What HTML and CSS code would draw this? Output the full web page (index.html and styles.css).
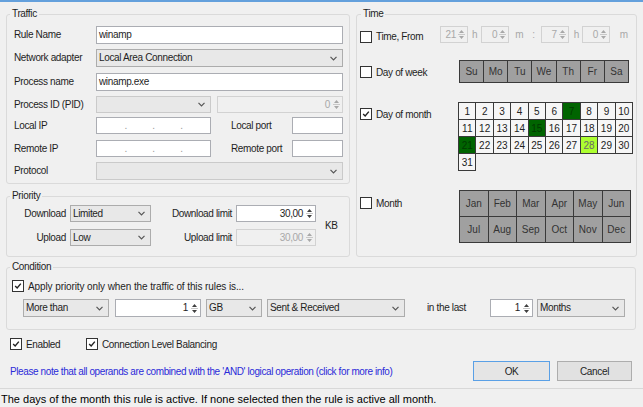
FILE: index.html
```html
<!DOCTYPE html>
<html>
<head>
<meta charset="utf-8">
<title>Rule</title>
<link rel="stylesheet" href="styles.css">
</head>
<body>
<svg class="defs" width="0" height="0">
  <symbol id="chev" viewBox="0 0 7 5"><path d="M0.5 0.8 L3.5 3.8 L6.5 0.8" fill="none" stroke="#555" stroke-width="1.2"/></symbol>
  <symbol id="arr" viewBox="0 0 9 15"><path d="M2 6 L4.5 3 L7 6 Z M2 9 L4.5 12 L7 9 Z" fill="currentColor"/><path d="M1 7.5 H8" stroke="#c8c8c8" stroke-width="1"/></symbol>
  <symbol id="tick" viewBox="0 0 12 12"><path d="M2.6 6 L5 8.4 L9.4 3.2" fill="none" stroke="#222" stroke-width="1.7"/></symbol>
</svg>
<div class="dialog">
  <div class="top">
    <div class="left-col">
      <fieldset class="group g-traffic">
        <legend>Traffic</legend>
        <div class="traffic-grid">
          <span class="lbl">Rule Name</span>
          <div class="tb">winamp</div>

          <span class="lbl">Network adapter</span>
          <div class="dd"><span>Local Area Connection</span><svg class="chev"><use href="#chev"/></svg></div>

          <span class="lbl">Process name</span>
          <div class="tb">winamp.exe</div>

          <span class="lbl">Process ID (PID)</span>
          <div class="pair">
            <div class="dd off w-pid"><span></span><svg class="chev"><use href="#chev"/></svg></div>
            <div class="spin off w-pidspin"><span class="val">0</span><svg class="arr"><use href="#arr"/></svg></div>
          </div>

          <span class="lbl">Local IP</span>
          <div class="pair">
            <div class="tb ip"><i>.</i><i>.</i><i>.</i></div>
            <span class="port-lbl">Local port</span>
            <div class="tb port"></div>
          </div>

          <span class="lbl">Remote IP</span>
          <div class="pair">
            <div class="tb ip"><i>.</i><i>.</i><i>.</i></div>
            <span class="port-lbl">Remote port</span>
            <div class="tb port"></div>
          </div>

          <span class="lbl">Protocol</span>
          <div class="dd off tall"><span></span><svg class="chev"><use href="#chev"/></svg></div>
        </div>
      </fieldset>

      <fieldset class="group g-priority">
        <legend>Priority</legend>
        <div class="prio-grid">
          <span class="plbl">Download</span>
          <div class="dd short"><span>Limited</span><svg class="chev"><use href="#chev"/></svg></div>
          <span class="plbl">Download limit</span>
          <div class="spin short"><span class="val">30,00</span><svg class="arr"><use href="#arr"/></svg></div>
          <span class="kb">KB</span>

          <span class="plbl">Upload</span>
          <div class="dd short"><span>Low</span><svg class="chev"><use href="#chev"/></svg></div>
          <span class="plbl">Upload limit</span>
          <div class="spin off short"><span class="val">30,00</span><svg class="arr"><use href="#arr"/></svg></div>
        </div>
      </fieldset>
    </div>

    <fieldset class="group g-time">
      <legend>Time</legend>
      <div class="trow r-time">
        <label class="chk w-time"><span class="cb"></span>Time, From</label>
        <div class="spin off tspin"><span class="val">21</span><svg class="arr"><use href="#arr"/></svg></div>
        <span class="unit u1">h</span>
        <div class="spin off tspin"><span class="val">0</span><svg class="arr"><use href="#arr"/></svg></div>
        <span class="unit u2">m</span>
        <span class="unit u3">:</span>
        <div class="spin off tspin"><span class="val">7</span><svg class="arr"><use href="#arr"/></svg></div>
        <span class="unit u4">h</span>
        <div class="spin off tspin"><span class="val">0</span><svg class="arr"><use href="#arr"/></svg></div>
        <span class="unit u5">m</span>
      </div>

      <div class="trow r-week">
        <label class="chk w-side"><span class="cb"></span>Day of week</label>
        <table class="cal gray week">
          <tr><td>Su</td><td>Mo</td><td>Tu</td><td>We</td><td>Th</td><td>Fr</td><td>Sa</td></tr>
        </table>
      </div>

      <div class="trow r-mday">
        <label class="chk w-side"><span class="cb on"><svg><use href="#tick"/></svg></span>Day of month</label>
        <table class="cal days">
          <tr><td>1</td><td>2</td><td>3</td><td>4</td><td>5</td><td>6</td><td class="sel">7</td><td>8</td><td>9</td><td>10</td></tr>
          <tr><td>11</td><td>12</td><td>13</td><td>14</td><td class="sel">15</td><td>16</td><td>17</td><td>18</td><td>19</td><td>20</td></tr>
          <tr><td class="sel">21</td><td>22</td><td>23</td><td>24</td><td>25</td><td>26</td><td>27</td><td class="today">28</td><td>29</td><td>30</td></tr>
          <tr><td>31</td></tr>
        </table>
      </div>

      <div class="trow r-month">
        <label class="chk w-side"><span class="cb"></span>Month</label>
        <table class="cal gray months">
          <tr><td>Jan</td><td>Feb</td><td>Mar</td><td>Apr</td><td>May</td><td>Jun</td></tr>
          <tr><td>Jul</td><td>Aug</td><td>Sep</td><td>Oct</td><td>Nov</td><td>Dec</td></tr>
        </table>
      </div>
    </fieldset>
  </div>

  <fieldset class="group g-cond">
    <legend>Condition</legend>
    <label class="chk cond-chk"><span class="cb on"><svg><use href="#tick"/></svg></span>Apply priority only when the traffic of this rules is...</label>
    <div class="cond-row">
      <div class="dd w-more"><span>More than</span><svg class="chev"><use href="#chev"/></svg></div>
      <div class="spin w-amount"><span class="val">1</span><svg class="arr"><use href="#arr"/></svg></div>
      <div class="dd w-unit"><span>GB</span><svg class="chev"><use href="#chev"/></svg></div>
      <div class="dd w-dir"><span>Sent &amp; Received</span><svg class="chev"><use href="#chev"/></svg></div>
      <span class="last-lbl">in the last</span>
      <div class="spin w-period"><span class="val">1</span><svg class="arr"><use href="#arr"/></svg></div>
      <div class="dd w-months"><span>Months</span><svg class="chev"><use href="#chev"/></svg></div>
    </div>
  </fieldset>

  <div class="options">
    <label class="chk opt-enabled"><span class="cb on"><svg><use href="#tick"/></svg></span>Enabled</label>
    <label class="chk"><span class="cb on"><svg><use href="#tick"/></svg></span>Connection Level Balancing</label>
  </div>

  <div class="actions">
    <span class="note">Please note that all operands are combined with the 'AND' logical operation (click for more info)</span>
    <button class="btn default">OK</button>
    <button class="btn">Cancel</button>
  </div>
</div>
<div class="status">The days of the month this rule is active. If none selected then the rule is active all month.</div>
</body>
</html>
```

FILE: styles.css
```css
* { box-sizing: border-box; }
html, body { margin: 0; padding: 0; }
body {
  width: 643px;
  height: 407px;
  overflow: hidden;
  background: #f0f0f0;
  border-top: 2px solid #64a0dc;
  font-family: "Liberation Sans", Arial, sans-serif;
  font-size: 10px;
  letter-spacing: -0.35px;
  color: #1e1e1e;
  display: flex;
  flex-direction: column;
}
.defs { display: block; width: 0; height: 0; overflow: hidden; }
.dialog { flex: 1; }

.top { display: flex; gap: 6px; padding: 6px 6px 0 6px; }
.left-col { width: 344px; display: flex; flex-direction: column; gap: 6px; }

.group {
  margin: 0;
  min-width: 0;
  border: 1px solid #dadada;
  border-radius: 3px;
  padding: 6px 5px 3px 7px;
}
.group legend { padding: 0 2px; margin-left: -4px; height: 12px; line-height: 12px; }

/* Controls */
.tb, .dd, .spin {
  height: 18px;
  border: 1px solid #abadb3;
  background: #fff;
  display: flex;
  align-items: center;
  line-height: 16px;
  white-space: nowrap;
  overflow: hidden;
}
.tb { padding: 0 2px; }
.dd { background: #e8e8e8; border-color: #acacac; padding: 0 5px 0 2px; justify-content: space-between; }
.dd.off { border-color: #cacaca; }
.chev { width: 7px; height: 5px; flex: none; }
.spin { padding: 0 1px 0 2px; }
.spin .val { flex: 1; text-align: right; padding-right: 2px; }
.arr { width: 9px; height: 15px; flex: none; color: #404040; }
.spin.off { background: #f0f0f0; border-color: #d2d2d2; color: #a8a8a8; }
.spin.off .arr { color: #a8a8a8; }

/* Traffic */
.traffic-grid {
  display: grid;
  grid-template-columns: 82px 247px;
  grid-template-rows: 18px 19px 18px 16px 18px 17px 18px;
  row-gap: 5px;
  align-items: start;
}
.lbl { line-height: 17px; }
.pair { display: flex; align-items: flex-start; }
.w-pid { width: 115px; height: 17px; }
.w-pidspin { width: 126px; height: 17px; margin-left: 6px; }
.ip { width: 115px; height: 17px; justify-content: space-evenly; color: #9a9a9a; }
.ip i { font-style: normal; }
.port-lbl { width: 61px; margin-left: 20px; line-height: 17px; }
.port { width: 51px; height: 17px; }
.tall { height: 18px; }

/* Priority */
.g-priority { padding: 3px 5px 10px 7px; }
.prio-grid {
  display: grid;
  grid-template-columns: 52px 81px 77px 80px auto;
  grid-template-rows: 17px 17px;
  column-gap: 4px;
  row-gap: 7px;
  align-items: center;
}
.plbl { text-align: right; }
.short { height: 17px; }
.kb { grid-column: 5; grid-row: 1 / span 2; margin-left: 5px; align-self: center; }

/* Time */
.g-time { flex: 1; padding: 6px 3px 3px 3px; }
.g-time legend { margin-left: 1px; }
.trow { display: flex; }
.chk { display: flex; align-items: center; white-space: nowrap; }
.cb {
  width: 12px; height: 12px;
  border: 1px solid #333;
  background: #fff;
  margin-right: 4px;
  flex: none;
  display: flex;
}
.cb svg { width: 10px; height: 10px; }
.w-time { width: 80px; margin-top: 4px; }
.w-side { width: 99px; align-self: flex-start; }
.r-time { height: 17px; align-items: center; }
.tspin { width: 28px; height: 17px; }
.tspin .val { padding-right: 1px; }
.unit { color: #a8a8a8; }
.u1 { margin: 0 4px 0 4px; }
.u2 { margin: 0 0 0 6px; }
.u3 { margin: 0 6px 0 9px; }
.u4 { margin: 0 3px 0 5px; }
.u5 { margin: 0 0 0 10px; }

.r-week { margin-top: 17px; align-items: center; }
.r-week .w-side { align-self: center; margin-top: 1px; }
.r-mday { margin-top: 19px; }
.r-mday .w-side { margin-top: 6px; }
.r-month { margin-top: 19px; }
.r-month .w-side { margin-top: 7px; }

.cal { border-collapse: collapse; table-layout: fixed; letter-spacing: 0; }
.cal td { border: 1px solid #3a3a3a; text-align: center; padding: 0; }
.gray td { background: #a0a0a0; color: #333; }
.week { width: 170px; height: 23px; }
.days { width: 174px; }
.days td { background: #f6f6f6; height: 17px; width: 17.4px; color: #222; }
.days td.sel { background: #006400; color: #003a00; }
.days td.today { background: #adff2f; color: #6a6a6a; }
.months { width: 172px; }
.months td { height: 26px; }

/* Condition */
.g-cond { margin: 4px 7px 0 6px; padding: 6px 5px 12px 5px; }
.g-cond legend { margin-left: -2px; }
.cond-chk { height: 14px; letter-spacing: -0.1px; }
.cond-row { display: flex; margin: 6px 0 0 11px; }
.cond-row > * { height: 18px; }
.w-more { width: 86px; }
.w-amount { width: 86px; margin-left: 6px; }
.w-unit { width: 56px; margin-left: 5px; }
.w-dir { width: 138px; margin-left: 5px; }
.last-lbl { width: 63px; margin-left: 22px; line-height: 18px; }
.w-period { width: 43px; }
.w-months { width: 88px; margin-left: 4px; }

/* Options */
.options { display: flex; margin-top: 8px; padding-left: 10px; height: 12px; }
.opt-enabled { width: 76px; }

/* Actions */
.actions { display: flex; align-items: center; margin-top: 11px; padding: 0 11px 0 10px; height: 20px; }
.note { flex: 1; color: #2b2bd9; letter-spacing: -0.4px; }
.btn {
  font: inherit;
  letter-spacing: inherit;
  color: #1e1e1e;
  height: 20px;
  border: 1px solid #adadad;
  background: #e1e1e1;
  padding: 0;
  width: 75px;
}
.btn.default { width: 77px; margin-right: 7px; border-color: #5aa0e6; background: #e5e5e5; }

/* Status bar */
.status {
  height: 19px;
  border-top: 1px solid #d8d8d8;
  padding: 3px 0 0 1px;
  line-height: 15px;
  font-size: 11px;
  letter-spacing: 0;
  color: #000;
  white-space: nowrap;
}
```
